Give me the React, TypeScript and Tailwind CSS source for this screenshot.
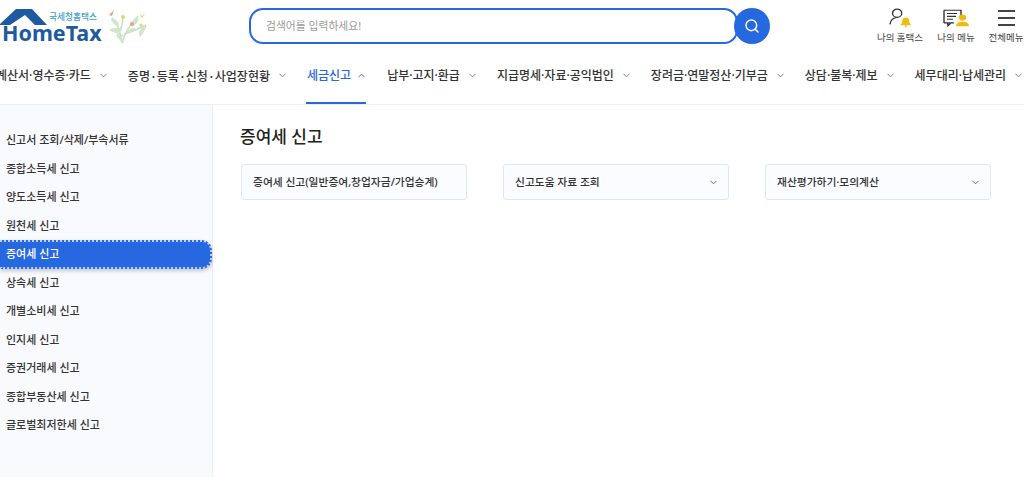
import { ChevronDown, ChevronUp, Search } from "lucide-react";

const nav = [
  { t: "계산서·영수증·카드" },
  { t: "증명·등록·신청·사업장현황", wide: true },
  { t: "세금신고", active: true },
  { t: "납부·고지·환급" },
  { t: "지급명세·자료·공익법인" },
  { t: "장려금·연말정산·기부금" },
  { t: "상담·불복·제보" },
  { t: "세무대리·납세관리" },
];

const side = [
  "신고서 조회/삭제/부속서류",
  "종합소득세 신고",
  "양도소득세 신고",
  "원천세 신고",
  "증여세 신고",
  "상속세 신고",
  "개별소비세 신고",
  "인지세 신고",
  "증권거래세 신고",
  "종합부동산세 신고",
  "글로벌최저한세 신고",
];

function Logo() {
  return (
    <div className="relative w-[150px] h-[44px] shrink-0">
      <svg className="absolute left-0 top-0" width="150" height="46" viewBox="0 0 150 46">
        <path d="M0 24 L16 9 H32 L47 25 H35 L25 15 L10 25 H0 Z" fill="#1d5a9e" />
        <g fill="none" stroke="#c4e0c0" strokeWidth="1.4">
          <path d="M122 43 C120 30 118 24 112 18" />
          <path d="M122 43 C125 32 130 24 138 16" />
          <path d="M123 36 C118 33 114 31 110 30" />
          <path d="M124 34 C130 33 136 30 146 25" />
          <path d="M120 30 C124 24 122 20 123 16" />
          <path d="M140 36 C142 32 144 30 146 26" />
        </g>
        <g fill="#cfe6ca">
          <ellipse cx="115" cy="22" rx="5" ry="2" transform="rotate(45 115 22)" />
          <ellipse cx="116" cy="30" rx="6" ry="2" />
          <ellipse cx="130" cy="31" rx="6" ry="2" transform="rotate(-25 130 31)" />
          <ellipse cx="135" cy="22" rx="5" ry="2" transform="rotate(-50 135 22)" />
          <ellipse cx="142" cy="31" rx="5" ry="2" transform="rotate(-60 142 31)" />
          <ellipse cx="120" cy="38" rx="5" ry="1.6" transform="rotate(50 120 38)" />
        </g>
        <circle cx="123" cy="17" r="2" fill="#e9d35f" />
        <circle cx="132" cy="24" r="2" fill="#ea9d8a" />
        <circle cx="141" cy="25" r="1.5" fill="#e9d35f" />
        <path d="M109 15 L114 10 L112 16 Z" fill="#ea9d8a" />
        <path d="M139 13 L142 16 L145 13 L142 18 Z" fill="#eacb55" />
      </svg>
      <span className="absolute left-[49px] top-[12px] text-[8.7px] leading-[10px] text-[#3fa0c8] font-medium">
        국세청홈택스
      </span>
      <span className="absolute left-[2px] top-[22px] text-[21.5px] leading-[22px] font-bold text-[#1d5a9e] font-['Noto_Sans',sans-serif]">
        HomeTax
      </span>
    </div>
  );
}

function TopIcon({ label, kind, className }: { label: string; kind: "home" | "menu" | "all"; className: string }) {
  return (
    <div className={`flex flex-col items-center w-[50px] ${className}`}>
      <div className="h-[21px] flex items-end">
        {kind === "home" && (
          <svg width="23" height="19" viewBox="0 0 24 22" preserveAspectRatio="none">
            <circle cx="8.5" cy="6" r="4.8" fill="none" stroke="#333" strokeWidth="1.4" />
            <path d="M1 19 C1.5 14 4 11.5 8 11" fill="none" stroke="#333" strokeWidth="1.4" />
            <path d="M11.5 20 C13.5 18 14 17 14 14 C14 12 16 11 17.5 11 C19 11 21 12 21 14 C21 17 21.5 18 23.5 20 Z" fill="#eebb11" />
            <circle cx="17.5" cy="21" r="1" fill="#eebb11" />
          </svg>
        )}
        {kind === "menu" && (
          <svg width="28" height="18" viewBox="0 0 28 22" preserveAspectRatio="none">
            <path d="M2 1.5 H19 V9 M12 17 H9 L6 20.5 L5.5 17 H2 Z M2 1.5 V17" fill="none" stroke="#333" strokeWidth="1.4" />
            <path d="M5 5.5 H15 M5 9 H14 M5 12.5 H11" stroke="#333" strokeWidth="1.3" />
            <circle cx="20.5" cy="10.5" r="3.8" fill="#eebb11" />
            <path d="M14 21 C14 17 17 15.5 20.5 15.5 C24 15.5 27 17 27 21 Z" fill="#eebb11" />
          </svg>
        )}
        {kind === "all" && (
          <div className="flex flex-col gap-[5px] w-[17px] mb-[1px]">
            <div className="h-[2px] bg-[#444]" />
            <div className="h-[2px] bg-[#444]" />
            <div className="h-[2px] bg-[#444]" />
          </div>
        )}
      </div>
      <span className="text-[9.5px] leading-[12px] mt-[5px] text-[#444] whitespace-nowrap">{label}</span>
    </div>
  );
}

function Select({ label, chevron, className }: { label: string; chevron?: boolean; className: string }) {
  return (
    <div className={`h-[36px] flex items-center justify-between bg-[#fafcff] border border-[#dfe7f6] rounded-[3px] pl-[11px] pr-[9px] ${className}`}>
      <span className="text-[10.75px] font-medium text-[#333] whitespace-nowrap">{label}</span>
      {chevron && <ChevronDown size={11} className="text-[#666]" />}
    </div>
  );
}

export default function App() {
  return (
    <div className="w-[1024px] h-[477px] overflow-hidden bg-white flex flex-col font-['Noto_Sans','Noto_Sans_CJK_KR',sans-serif]">
      <header className="h-[105px] shrink-0 border-b border-[#eceef2] flex flex-col">
        <div className="h-[50px] flex">
          <Logo />
          <div className="flex items-center ml-[99px] mt-[8px] h-[36px]">
            <div className="w-[489px] h-[36px] border-2 border-[#2668e0] rounded-[14px] flex items-center pl-[15px] -mr-[4px]">
              <span className="text-[10.8px] text-[#9a9a9a]">검색어를 입력하세요!</span>
            </div>
            <div className="w-[36px] h-[36px] rounded-full bg-[#2668e0] flex items-center justify-center relative">
              <Search size={16} className="text-white" strokeWidth={2.2} />
            </div>
          </div>
          <div className="flex ml-auto pt-[6px] mr-[-7px]">
            <TopIcon className="mr-[6px]" label="나의 홈택스" kind="home" />
            <TopIcon className="" label="나의 메뉴" kind="menu" />
            <TopIcon className="" label="전체메뉴" kind="all" />
          </div>
        </div>
        <nav className="flex-1 flex gap-[19px] -ml-[4px] min-w-0 whitespace-nowrap">
          {nav.map((n) => (
            <div key={n.t} className="relative flex items-center h-[54px] shrink-0">
              <span
                className={`text-[12px] font-medium -mt-[3px] ${n.active ? "text-[#2668e0]" : "text-[#333]"} ${n.wide ? "font-['Noto_Sans_CJK_KR',sans-serif]" : ""}`}
              >
                {n.t}
              </span>
              {n.active ? (
                <ChevronUp size={11} className="ml-[5px] mr-[1px] -mt-[3px] text-[#2668e0]" />
              ) : (
                <ChevronDown size={11} className="ml-[7px] -mt-[3px] text-[#777]" />
              )}
              {n.active && <div className="absolute left-[-1px] right-[2px] bottom-0 h-[2px] bg-[#2668e0]" />}
            </div>
          ))}
        </nav>
      </header>
      <div className="flex-1 flex min-h-0">
        <aside className="w-[213px] shrink-0 bg-[#f9fafe] border-r border-[#eceef4] pt-[21px]">
          {side.map((s) =>
            s === "증여세 신고" ? (
              <div
                key={s}
                className="h-[28.5px] flex items-center pl-[6px] bg-[#2668e0] border-2 border-dotted border-[#b9d0f8] border-l-0 rounded-r-[10px] shadow-[0_2px_4px_rgba(0,0,0,0.2)] text-white text-[11px] font-medium"
              >
                {s}
              </div>
            ) : (
              <div key={s} className="h-[28.5px] flex items-center pl-[6px] text-[11px] font-medium text-[#333]">
                {s}
              </div>
            ),
          )}
        </aside>
        <main className="flex-1 pl-[28px] pt-[20px]">
          <h1 className="text-[17px] leading-[24px] font-medium text-[#222] -ml-[1px]">증여세 신고</h1>
          <div className="flex mt-[15px]">
            <Select className="w-[226px] mr-[36px]" label="증여세 신고(일반증여,창업자금/가업승계)" />
            <Select className="w-[226px] mr-[36px]" label="신고도움 자료 조회" chevron />
            <Select className="w-[226px]" label="재산평가하기·모의계산" chevron />
          </div>
        </main>
      </div>
    </div>
  );
}
